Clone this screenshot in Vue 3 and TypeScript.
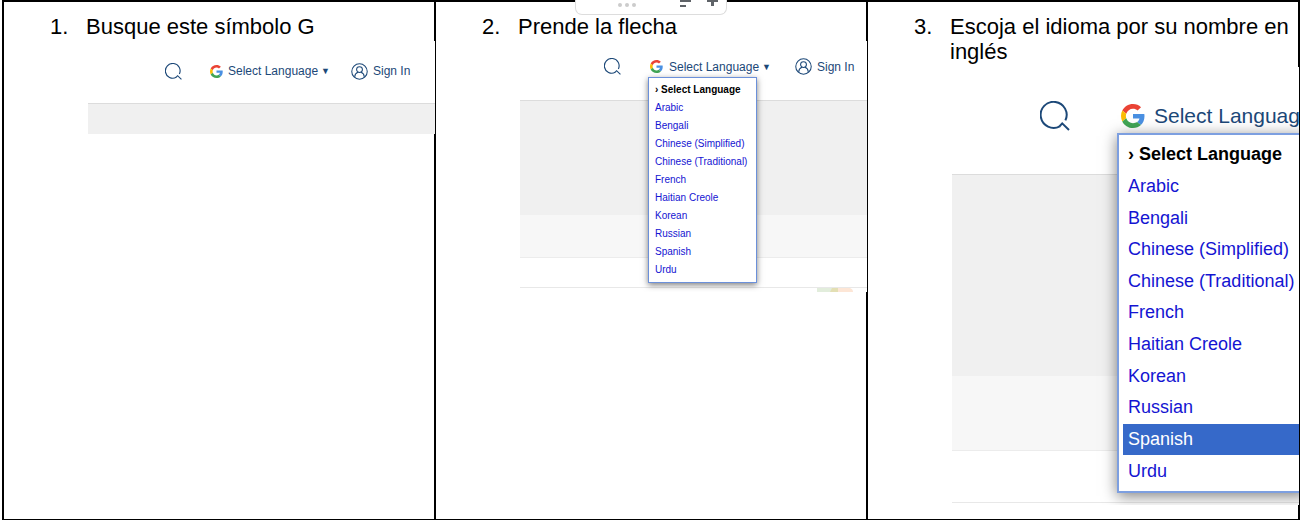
<script setup lang="ts">
interface Step {
  id: string
  title: string
  account: boolean
  menu: boolean
  active?: string
  bands: string[]
}

const languages: string[] = [
  'Arabic',
  'Bengali',
  'Chinese (Simplified)',
  'Chinese (Traditional)',
  'French',
  'Haitian Creole',
  'Korean',
  'Russian',
  'Spanish',
  'Urdu',
]

const steps: Step[] = [
  { id: 'find', title: 'Busque este símbolo G', account: true, menu: false, bands: ['hero'] },
  { id: 'open', title: 'Prende la flecha', account: true, menu: true, bands: ['hero', 'sub', 'blank', 'foot'] },
  {
    id: 'pick',
    title: 'Escoja el idioma por su nombre en inglés',
    account: false,
    menu: true,
    active: 'Spanish',
    bands: ['hero', 'sub', 'blank', 'foot'],
  },
]
</script>

<template>
  <main class="page">
    <section v-for="(step, i) in steps" :key="step.id" class="cell" :class="step.id">
      <h2 class="title">
        <span class="num">{{ i + 1 }}.</span>
        <span>{{ step.title }}</span>
      </h2>

      <div class="shot">
        <div class="bar">
          <button class="search" type="button" aria-label="Search">
            <svg viewBox="0 0 30 30" fill="none" stroke="currentColor" stroke-width="2">
              <path d="M19.8 25.3A13 13 0 1 1 25.4 19.4" />
              <path d="M19.4 25.5L22.2 22.4L29 29" />
            </svg>
          </button>

          <div class="picker">
            <button class="language" type="button">
              <svg class="g" viewBox="0 0 48 48">
                <path fill="#ea4335" d="M24 9.5c3.54 0 6.71 1.22 9.21 3.6l6.85-6.85C35.9 2.38 30.47 0 24 0 14.62 0 6.51 5.38 2.56 13.22l7.98 6.19C12.43 13.72 17.74 9.5 24 9.5z" />
                <path fill="#4a90e2" d="M46.98 24.55c0-1.57-.15-3.09-.38-4.55H24v9.02h12.94c-.58 2.96-2.26 5.48-4.78 7.18l7.73 6c4.51-4.18 7.09-10.36 7.09-17.65z" />
                <path fill="#fbbc05" d="M10.53 28.59c-.48-1.45-.76-2.99-.76-4.59s.27-3.14.76-4.59l-7.98-6.19C.92 16.46 0 20.12 0 24c0 3.88.92 7.54 2.56 10.78l7.97-6.19z" />
                <path fill="#41a555" d="M24 48c6.48 0 11.93-2.13 15.89-5.81l-7.73-6c-2.15 1.45-4.92 2.3-8.16 2.3-6.26 0-11.57-4.22-13.47-9.91l-7.98 6.19C6.51 42.62 14.62 48 24 48z" />
              </svg>
              <span class="label">Select Language<span v-if="step.account" class="arrow">▼</span></span>
            </button>

            <nav v-if="step.menu" class="menu" aria-label="Select Language">
              <strong class="item current">› Select Language</strong>
              <a
                v-for="name in languages"
                :key="name"
                href="#"
                class="item"
                :class="{ active: name === step.active }"
              >{{ name }}</a>
            </nav>
          </div>

          <a v-if="step.account" class="account" href="#">
            <svg viewBox="0 0 18 18" fill="none" stroke="currentColor" stroke-width="1.1">
              <circle cx="9" cy="9" r="8.2" />
              <circle cx="9" cy="7" r="3.1" />
              <path d="M4 15.2V14.5C4 11.8 6 10.5 7.4 9.9M14 15.2V14.5C14 11.8 12 10.5 10.6 9.9" />
            </svg>
            <span>Sign In</span>
          </a>
        </div>

        <div v-for="band in step.bands" :key="band" class="band" :class="band">
          <svg v-if="band === 'foot' && step.id === 'open'" class="chip" viewBox="0 0 36 4">
            <path fill="#e2eddc" d="M0 0H16L14 4H0z" />
            <path fill="#e3dfb4" d="M15 0H21V4H13z" />
            <path fill="#fde6d6" d="M21 0H33Q36 1 36 4H21z" />
          </svg>
        </div>
      </div>
    </section>

    <div class="toolbar">
      <svg class="dots" viewBox="0 0 18 4" fill="#cccccc">
        <circle cx="2" cy="2" r="2" />
        <circle cx="9" cy="2" r="2" />
        <circle cx="16" cy="2" r="2" />
      </svg>
      <button type="button" aria-label="Align">
        <svg viewBox="0 0 11 7" fill="#5f6368"><path d="M0 0H11V2H0zM0 5H6V7H0z" /></svg>
      </button>
      <button type="button" aria-label="Add">
        <svg viewBox="0 0 11 7" fill="#5f6368"><path d="M0 0H11V2H7V6H4V2H0z" /></svg>
      </button>
    </div>
  </main>
</template>

<style>
body {
  margin: 0;
  background: #ffffff;
}
</style>

<style scoped>
.page {
  position: relative;
  display: grid;
  grid-template-columns: repeat(3, minmax(0, 1fr));
  gap: 2px;
  box-sizing: border-box;
  min-height: 100vh;
  margin: 0 2px;
  padding: 2px 2px 1px;
  background: #000000;
  font-family: "Liberation Sans", Arial, Helvetica, sans-serif;
}

.cell {
  background: #ffffff;
  padding-top: 12px;
}

.title {
  display: flex;
  margin: 0 0 2px;
  padding-left: 46px;
  color: #000000;
  font-size: 22px;
  font-weight: 400;
  line-height: 25px;
}

.num {
  flex: 0 0 36px;
}

.shot {
  --text: 12px;
  --icon: 17px;
  --g: 13px;
  margin-left: 84px;
  margin-right: -1px;
  overflow: hidden;
  background: #ffffff;
}

button {
  padding: 0;
  border: 0;
  background: none;
  color: inherit;
  font: inherit;
}

svg {
  display: block;
  flex: none;
}

.bar {
  display: flex;
  align-items: center;
  box-sizing: border-box;
  border-bottom: 1px solid #dcdcdc;
  color: #1c4878;
  font-size: var(--text);
  white-space: nowrap;
}

.search svg,
.account svg {
  width: var(--icon);
  height: var(--icon);
}

.picker {
  position: relative;
}

.language,
.account {
  display: flex;
  align-items: center;
  gap: 5px;
}

.account {
  color: inherit;
  text-decoration: none;
}

.g {
  width: var(--g);
  height: var(--g);
}

.label {
  display: flex;
  align-items: center;
  gap: 3px;
}

.arrow {
  font-size: 9px;
}

.menu {
  position: absolute;
  display: grid;
  grid-auto-rows: 1fr;
  box-sizing: border-box;
  border: 1px solid #6b90da;
  background: #ffffff;
  z-index: 1;
}

.item {
  display: flex;
  align-items: center;
  color: #1414d2;
  text-decoration: none;
}

.current {
  color: #000000;
}

.active {
  background: #3669c9;
  color: #ffffff;
}

.hero {
  background: #f0f0f0;
}

.sub {
  background: #f7f7f7;
  border-bottom: 1px solid #ececec;
}

.foot {
  border-top: 1px solid #e8e8e8;
}

.find .bar {
  height: 63px;
  padding: 0 0 2px 77px;
}

.find .picker {
  margin: 0 21px 0 28px;
}

.find .hero {
  height: 30px;
}

.open .bar {
  height: 60px;
  padding: 0 0 8px 84px;
}

.open .picker {
  margin: 0 24px 0 29px;
}

.open .language {
  gap: 6px;
}

.open .hero {
  height: 114px;
}

.open .sub {
  height: 42px;
}

.open .blank {
  height: 29px;
}

.open .foot {
  height: 4px;
}

.open .menu {
  top: 17px;
  left: -2px;
  width: 109px;
  height: 206px;
  padding: 3px;
  box-shadow: 0 2px 6px rgba(0, 0, 0, 0.5);
  font-size: 10px;
}

.open .item {
  padding-left: 3px;
}

.chip {
  width: 36px;
  height: 4px;
  margin: 0 14px 0 auto;
}

.pick .shot {
  --text: 21px;
  --icon: 30px;
  --g: 24px;
}

.pick .title {
  margin-bottom: 3px;
}

.pick .bar {
  height: 108px;
  padding: 0 0 9px 88px;
}

.pick .picker {
  margin-left: 51px;
}

.pick .language {
  gap: 9px;
}

.pick .hero {
  height: 201px;
}

.pick .sub {
  height: 74px;
}

.pick .blank {
  height: 51px;
}

.pick .foot {
  height: 2px;
}

.pick .menu {
  top: 29px;
  left: -4px;
  width: 190px;
  height: 360px;
  padding: 4px;
  border-width: 2px;
  border-color: #7d9fe0;
  box-shadow: 0 3px 14px rgba(0, 0, 0, 0.5);
  font-size: 18px;
}

.pick .item {
  padding-left: 5px;
}

.toolbar {
  position: absolute;
  top: 0;
  left: 50%;
  display: flex;
  align-items: flex-start;
  box-sizing: border-box;
  width: 152px;
  height: 15px;
  padding-left: 42px;
  transform: translateX(-50%);
  border: 1px solid #dddddd;
  border-top: 0;
  border-radius: 0 0 7px 7px;
  background: #ffffff;
  z-index: 2;
}

.dots {
  width: 18px;
  height: 4px;
  margin: 3px 44px 0 0;
}

.toolbar button {
  margin-right: 16px;
}

.toolbar button svg {
  width: 11px;
  height: 7px;
}
</style>
